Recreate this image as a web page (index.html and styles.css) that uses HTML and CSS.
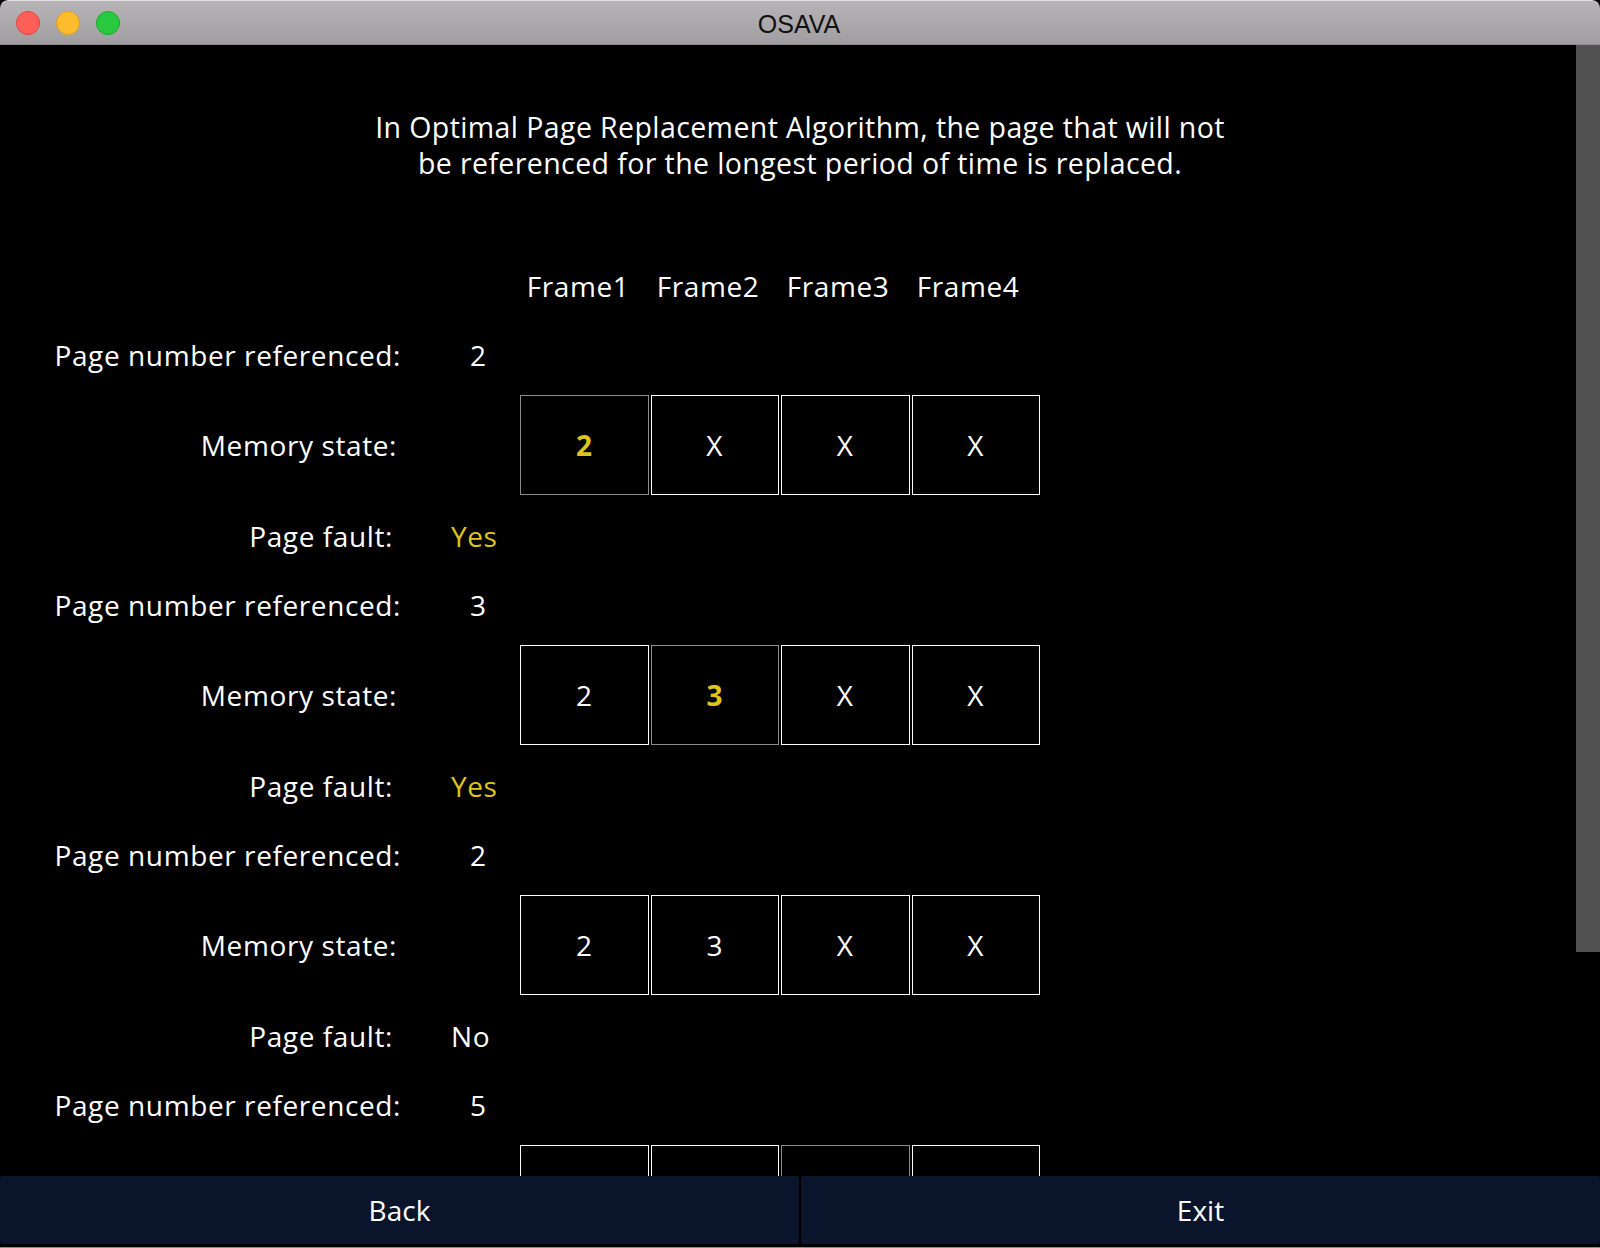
FILE: index.html
```html
<!DOCTYPE html>
<html>
<head>
<meta charset="utf-8">
<title>OSAVA</title>
<link rel="stylesheet" href="styles.css">
</head>
<body>
<div class="window">
  <div class="titlebar">
    <div class="lights">
      <span class="light red"></span>
      <span class="light yellow"></span>
      <span class="light green"></span>
    </div>
    <div class="title">OSAVA</div>
  </div>
  <div class="content">
    <div class="scrollbar"></div>
    <p class="desc">In Optimal Page Replacement Algorithm, the page that will not<br>be referenced for the longest period of time is replaced.</p>
    <div class="frames-head">
      <span>Frame1</span><span>Frame2</span><span>Frame3</span><span>Frame4</span>
    </div>

    <div class="group">
      <div class="row pnr"><span class="label">Page number referenced:</span><span class="val">2</span></div>
      <div class="row ms"><span class="label">Memory state:</span>
        <div class="boxes"><div class="box hl">2</div><div class="box">X</div><div class="box">X</div><div class="box">X</div></div>
      </div>
      <div class="row pf"><span class="label">Page fault:</span><span class="val yes">Yes</span></div>
    </div>

    <div class="group">
      <div class="row pnr"><span class="label">Page number referenced:</span><span class="val">3</span></div>
      <div class="row ms"><span class="label">Memory state:</span>
        <div class="boxes"><div class="box">2</div><div class="box hl">3</div><div class="box">X</div><div class="box">X</div></div>
      </div>
      <div class="row pf"><span class="label">Page fault:</span><span class="val yes">Yes</span></div>
    </div>

    <div class="group">
      <div class="row pnr"><span class="label">Page number referenced:</span><span class="val">2</span></div>
      <div class="row ms"><span class="label">Memory state:</span>
        <div class="boxes"><div class="box">2</div><div class="box">3</div><div class="box">X</div><div class="box">X</div></div>
      </div>
      <div class="row pf"><span class="label">Page fault:</span><span class="val">No</span></div>
    </div>

    <div class="group">
      <div class="row pnr"><span class="label">Page number referenced:</span><span class="val">5</span></div>
      <div class="row ms"><span class="label"></span>
        <div class="boxes"><div class="box"></div><div class="box"></div><div class="box hlb"></div><div class="box"></div></div>
      </div>
    </div>
  </div>
  <div class="footer">
    <button class="btn">Back</button>
    <button class="btn">Exit</button>
  </div>
</div>
</body>
</html>
```

FILE: styles.css
```css
* { box-sizing: border-box; }
html, body { margin: 0; padding: 0; background: #000; }
body { font-family: "Open Sans", "DejaVu Sans", sans-serif; color: #fff; }

.window {
  width: 1600px;
  height: 1248px;
  display: flex;
  flex-direction: column;
  background: #000;
  overflow: hidden;
  border-radius: 8px 8px 0 0;
}

.titlebar {
  height: 45px;
  flex: none;
  position: relative;
  background: linear-gradient(#b6b4b6, #a09ea0);
  border-top: 1px solid #e2e2e2;
  border-bottom: 1px solid #8e8c8e;
  border-radius: 8px 8px 0 0;
  display: flex;
  align-items: center;
  justify-content: center;
}
.lights {
  position: absolute;
  left: 16px;
  top: 10px;
  display: flex;
  gap: 16px;
}
.light {
  width: 24px;
  height: 24px;
  border-radius: 50%;
  display: block;
}
.red { background: #fe5f57; border: 1px solid #e0443e; }
.yellow { background: #febc2e; border: 1px solid #dea123; }
.green { background: #28c840; border: 1px solid #1aab29; }
.title {
  font-family: "Liberation Sans", Arial, sans-serif;
  font-size: 25px;
  color: #111;
  margin-top: 3px;
  margin-left: -2px;
}

.content {
  flex: 1;
  position: relative;
  overflow: hidden;
  background: #000;
}
.scrollbar {
  position: absolute;
  right: 0;
  top: 0;
  width: 24px;
  height: 907px;
  background: #515151;
}

.desc {
  margin: 0;
  padding-top: 64px;
  font-size: 28.5px;
  line-height: 36px;
  text-align: center;
  letter-spacing: 0.4px;
}

.frames-head {
  margin-top: 85px;
  height: 40px;
  display: grid;
  grid-template-columns: repeat(4, 130px);
  padding-left: 513px;
  align-items: center;
  font-size: 28px;
  letter-spacing: 0.6px;
}
.frames-head span { text-align: center; }

.group {
  margin-top: 24px;
  display: flex;
  flex-direction: column;
  gap: 15px;
}
.group + .group { margin-top: 19px; }

.row {
  display: flex;
  align-items: center;
  font-size: 28px;
  letter-spacing: 0.6px;
}
.row.pnr, .row.pf { height: 50px; }
.row.pf { margin-top: 1px; }
.row.ms { height: 100px; }

.label { text-align: right; flex: none; }
.pnr .label { width: 401px; }
.ms .label { width: 397px; }
.pf .label { width: 393px; }
.pnr .val { margin-left: 69px; }
.pf .val { margin-left: 58px; }
.val.yes { color: #dec41c; }

.boxes {
  margin-left: 123px;
  display: flex;
  gap: 2px;
}
.box {
  width: 128.5px;
  height: 100px;
  border: 1px solid #fff;
  display: flex;
  align-items: center;
  justify-content: center;
  font-size: 28px;
}
.box.hl { border-color: #8c8c8c; color: #dec41c; font-weight: 700; }
.box.hlb { border-color: #8c8c8c; }

.footer {
  flex: none;
  height: 72px;
  display: flex;
  gap: 2px;
  padding-bottom: 3px;
  background: #000;
  border-bottom: 1px solid #8a8a8a;
}
.btn {
  flex: 1;
  border: none;
  margin: 0;
  background: #0a152b;
  color: #fff;
  border-radius: 3px;
  font-family: "Open Sans", "DejaVu Sans", sans-serif;
  font-size: 28px;
  padding: 0;
}
```
